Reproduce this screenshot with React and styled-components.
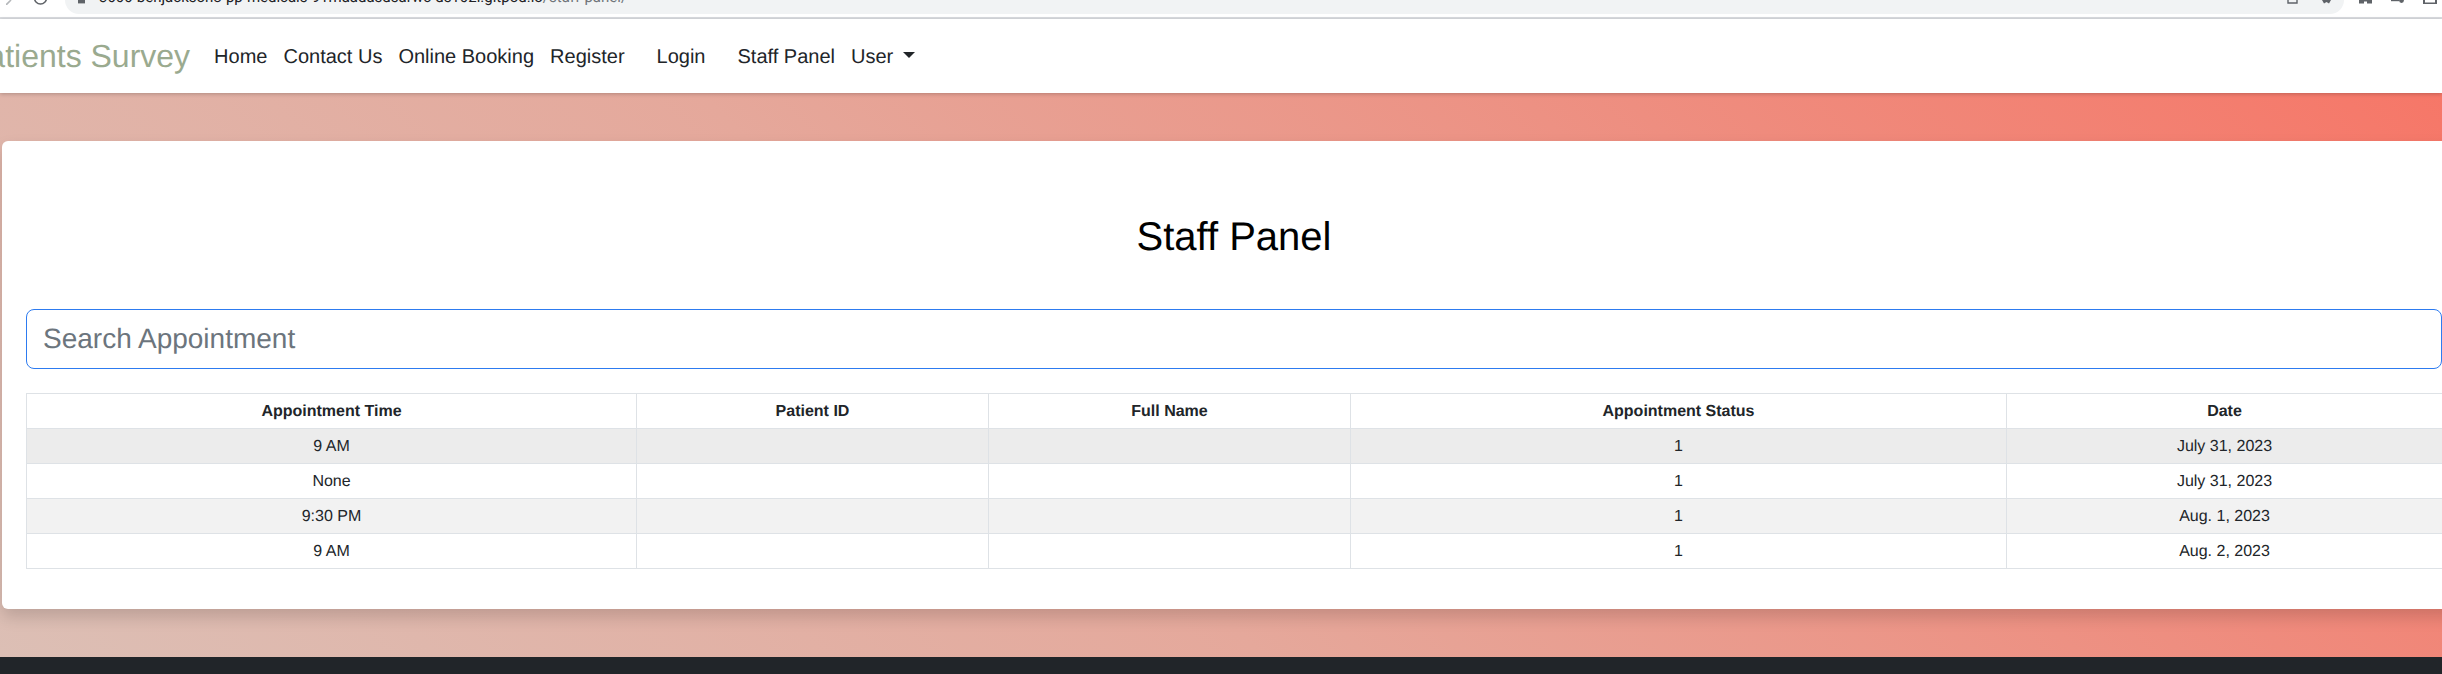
import React from "react";
import styled, { createGlobalStyle } from "styled-components";

const Global = createGlobalStyle`
  html, body { margin: 0; padding: 0; height: 674px; overflow: hidden; background: #fff; }
  body { font-family: "Liberation Sans", Arial, sans-serif; color: #212529; text-rendering: geometricPrecision; }
  * { box-sizing: border-box; }
`;

const Page = styled.div`
  width: 2442px;
  height: 674px;
  overflow: hidden;
  display: flex;
  flex-direction: column;
`;

const BrowserBar = styled.div`
  height: 19px;
  flex: none;
  display: flex;
  align-items: flex-start;
  border-bottom: 2px solid #dadce0;
  overflow: hidden;
`;

const ToolIcon = styled.svg`
  flex: none;
  display: block;
  margin-left: ${(p) => p.$left}px;
  color: #5f6368;
`;

const AddressBar = styled.div`
  flex: none;
  width: 2279px;
  height: 14px;
  margin-left: 17px;
  padding-left: 13px;
  background: #f1f3f4;
  border-radius: 0 0 16px 16px;
  display: flex;
  align-items: flex-start;
  overflow: hidden;
  position: relative;
`;

const Url = styled.div`
  font-family: Roboto, "Liberation Sans", sans-serif;
  font-size: 15px;
  line-height: 16px;
  margin-top: -11px;
  margin-left: 14px;
  white-space: nowrap;
  color: #202124;
  span { color: #70757a; }
`;

const ActionGroup = styled.div`
  position: absolute;
  right: 12px;
  top: 0;
  display: flex;
  gap: 23px;
`;

const Navbar = styled.nav`
  height: 74px;
  flex: none;
  background: #fff;
  display: flex;
  align-items: center;
  position: relative;
  z-index: 2;
  box-shadow: 0 1px 4px rgba(0, 0, 0, 0.22);
`;

const Brand = styled.a`
  font-size: 32px;
  line-height: 40px;
  color: #9aaa8f;
  margin-left: -34px;
  margin-right: 16px;
  white-space: nowrap;
`;

const NavList = styled.div`
  display: flex;
  align-items: center;
`;

const NavLink = styled.a`
  font-size: 20px;
  line-height: 30px;
  padding: 2px 8px 0;
  margin-right: ${(p) => p.$after || 0}px;
  color: #212529;
  white-space: nowrap;
  display: flex;
  align-items: center;
`;

const Caret = styled.span`
  width: 0;
  height: 0;
  margin-left: 10px;
  margin-top: -4px;
  border-top: 6px solid #212529;
  border-left: 6px solid transparent;
  border-right: 6px solid transparent;
`;

const Hero = styled.main`
  flex: none;
  height: 564px;
  padding: 48px 0 48px 2px;
  background: linear-gradient(45deg, #dcbfb5 0%, #e5a89b 42%, #f67768 100%);
`;

const Card = styled.section`
  width: 2464px;
  height: 468px;
  padding: 72px 24px 0;
  background: #fff;
  border-radius: 6px;
  box-shadow: 0 8px 16px rgba(0, 0, 0, 0.15);
`;

const Title = styled.h1`
  margin: 0 0 48px;
  font-size: 40px;
  line-height: 48px;
  font-weight: 400;
  text-align: center;
  color: #000;
`;

const Search = styled.input`
  display: block;
  width: 100%;
  height: 60px;
  padding: 0 16px;
  margin-bottom: 24px;
  font-family: inherit;
  font-size: 28px;
  text-rendering: geometricPrecision;
  border: 1px solid #2d7bf0;
  border-radius: 8px;
  outline: none;
  &::placeholder { color: #6c757d; opacity: 1; }
`;

const Table = styled.table`
  width: 2416px;
  table-layout: fixed;
  border-collapse: collapse;
  font-size: 16px;
  color: #212529;
`;

const Cell = styled.td`
  height: 35px;
  padding: 1px 0 0;
  text-align: center;
  border: 1px solid #dee2e6;
`;

const Head = styled(Cell).attrs({ as: "th" })`
  font-weight: 700;
`;

const Row = styled.tr`
  background: ${(p) => p.$bg || "#fff"};
`;

const Footer = styled.footer`
  flex: none;
  height: 17px;
  background: #212529;
`;

const columns = [610, 352, 362, 656, 436];
const heads = ["Appointment Time", "Patient ID", "Full Name", "Appointment Status", "Date"];
const rows = [
  { time: "9 AM", status: "1", date: "July 31, 2023", bg: "#ececec" },
  { time: "None", status: "1", date: "July 31, 2023", bg: "#fff" },
  { time: "9:30 PM", status: "1", date: "Aug. 1, 2023", bg: "#f2f2f2" },
  { time: "9 AM", status: "1", date: "Aug. 2, 2023", bg: "#fff" },
];
const links = [
  { label: "Home" },
  { label: "Contact Us" },
  { label: "Online Booking" },
  { label: "Register", after: 16 },
  { label: "Login", after: 16 },
  { label: "Staff Panel" },
];

export default function App() {
  return (
    <Page>
      <Global />
      <BrowserBar>
        <ToolIcon $left={6} width="8" height="5" viewBox="0 0 8 5">
          <path d="M0 5 L5 0" stroke="#b4b7ba" strokeWidth="1.6" fill="none" />
        </ToolIcon>
        <ToolIcon $left={19} width="15" height="5" viewBox="0 0 15 5">
          <path d="M1.5 0 A6 6 0 0 0 13.5 0" stroke="currentColor" strokeWidth="1.6" fill="none" transform="translate(0 -2)" />
        </ToolIcon>
        <AddressBar>
          <ToolIcon $left={0} width="7" height="4" viewBox="0 0 7 4">
            <rect width="7" height="3.4" fill="#5f6368" />
          </ToolIcon>
          <Url>
            3000-benjackson8-pp-medicals-91maadasdsarwc-ds102i.gitpod.io<span>/staff-panel/</span>
          </Url>
          <ActionGroup>
            <ToolIcon $left={0} width="11" height="4" viewBox="0 0 11 4">
              <path d="M1 0 V3 H10 V0" stroke="currentColor" strokeWidth="1.4" fill="none" />
            </ToolIcon>
            <ToolIcon $left={0} width="11" height="4" viewBox="0 0 11 4">
              <path d="M1 0 L3 3.5 L5.5 2 L8 3.5 L10 0 Z" fill="currentColor" />
            </ToolIcon>
          </ActionGroup>
        </AddressBar>
        <ToolIcon $left={15} width="13" height="4" viewBox="0 0 13 4">
          <path d="M0 0 H13 V3.5 H8 V1.5 H5 V3.5 H0 Z" fill="currentColor" />
        </ToolIcon>
        <ToolIcon $left={19} width="14" height="3" viewBox="0 0 14 3">
          <path d="M0 .6 H8" stroke="currentColor" strokeWidth="1.2" />
          <circle cx="10.5" cy="0.5" r="2.4" fill="currentColor" />
        </ToolIcon>
        <ToolIcon $left={18} width="14" height="4" viewBox="0 0 14 4">
          <path d="M0 0 H14 V4 H0 Z M2 0 V2.4 H12 V0 Z" fill="currentColor" fillRule="evenodd" />
        </ToolIcon>
      </BrowserBar>

      <Navbar>
        <Brand>Patients Survey</Brand>
        <NavList>
          {links.map((l) => (
            <NavLink key={l.label} $after={l.after}>{l.label}</NavLink>
          ))}
          <NavLink>
            User
            <Caret />
          </NavLink>
        </NavList>
      </Navbar>

      <Hero>
        <Card>
          <Title>Staff Panel</Title>
          <Search placeholder="Search Appointment" />
          <Table>
            <colgroup>
              {columns.map((w, i) => (
                <col key={i} width={w} />
              ))}
            </colgroup>
            <thead>
              <tr>
                {heads.map((h) => (
                  <Head key={h}>{h}</Head>
                ))}
              </tr>
            </thead>
            <tbody>
              {rows.map((r, i) => (
                <Row key={i} $bg={r.bg}>
                  <Cell>{r.time}</Cell>
                  <Cell />
                  <Cell />
                  <Cell>{r.status}</Cell>
                  <Cell>{r.date}</Cell>
                </Row>
              ))}
            </tbody>
          </Table>
        </Card>
      </Hero>
      <Footer />
    </Page>
  );
}
